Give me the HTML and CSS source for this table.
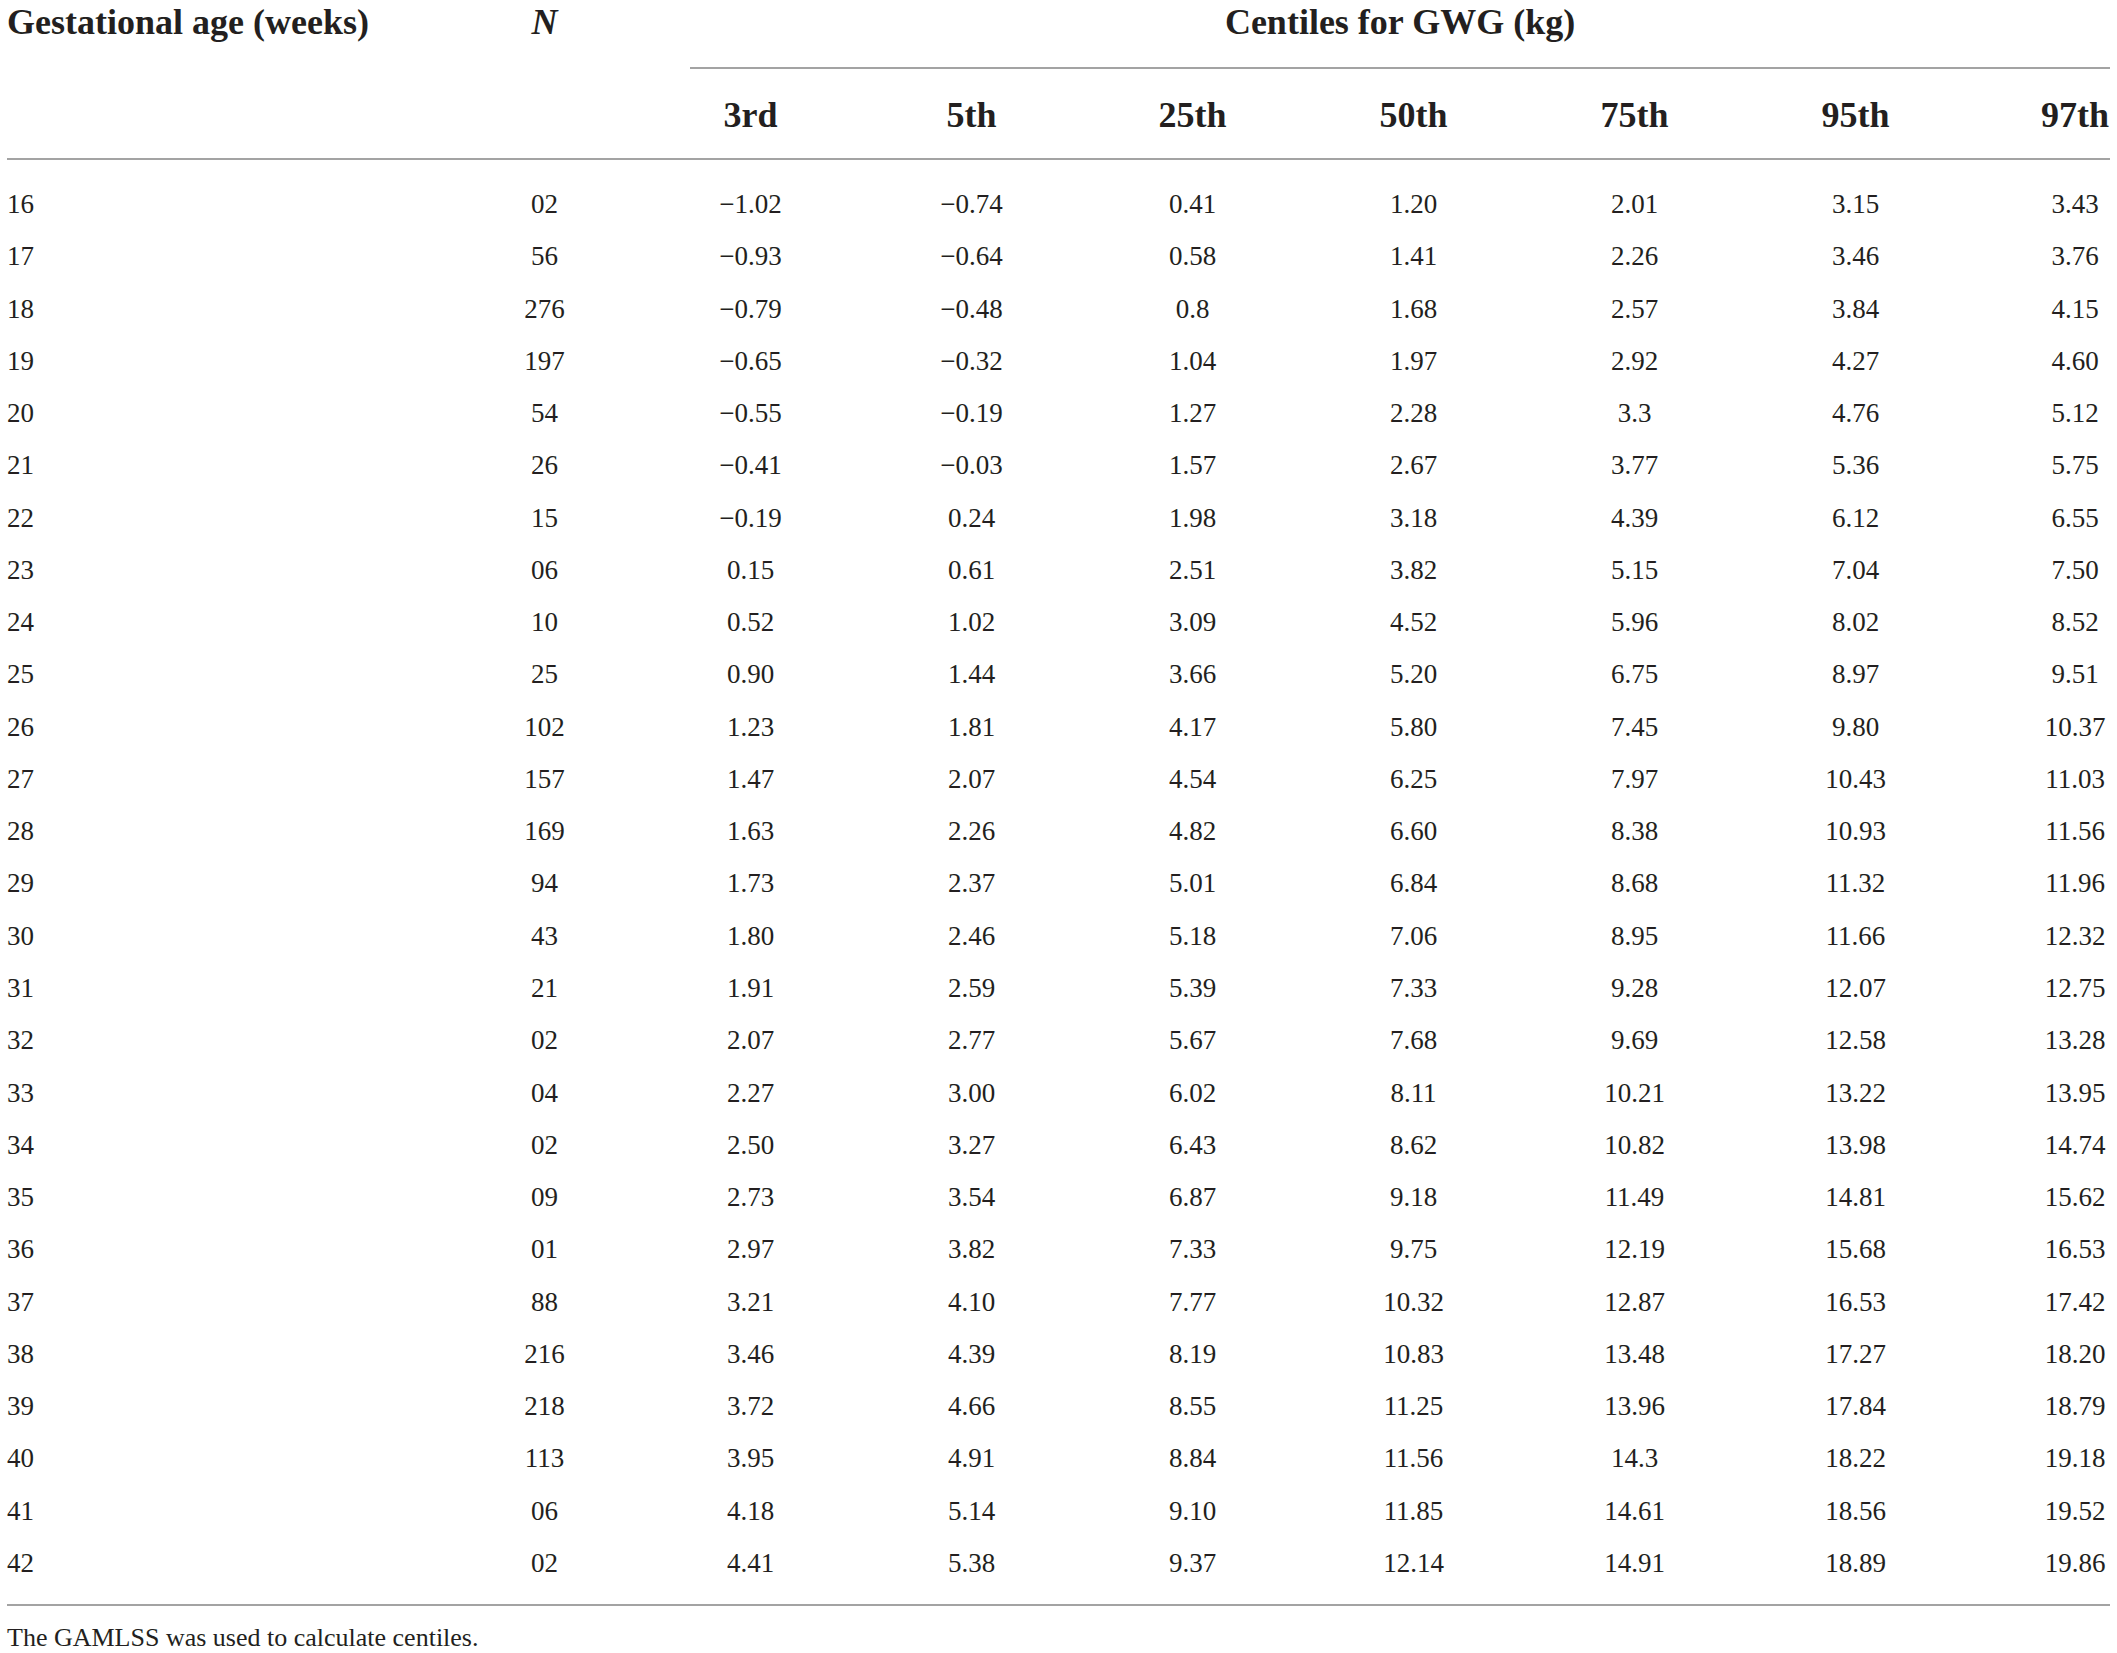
FILE: index.html
```html
<!DOCTYPE html>
<html lang="en">
<head>
<meta charset="utf-8">
<title>Centiles for GWG</title>
<link rel="stylesheet" href="styles.css">
</head>
<body>
<div class="page">
<table class="gwg">
  <colgroup>
    <col class="c-age"><col class="c-n"><col class="c-cen"><col class="c-cen"><col class="c-cen"><col class="c-cen"><col class="c-cen"><col class="c-cen"><col class="c-last">
  </colgroup>
  <thead>
    <tr class="h1">
      <th class="left">Gestational age (weeks)</th>
      <th><em>N</em></th>
      <th colspan="7" class="span"><div class="span-inner">Centiles for GWG (kg)</div></th>
    </tr>
    <tr class="h2">
      <th></th><th></th>
      <th>3rd</th><th>5th</th><th>25th</th><th>50th</th><th>75th</th><th>95th</th><th class="last">97th</th>
    </tr>
  </thead>
  <tbody>
    <tr><td class="left">16</td><td>02</td><td>−1.02</td><td>−0.74</td><td>0.41</td><td>1.20</td><td>2.01</td><td>3.15</td><td class="last">3.43</td></tr>
    <tr><td class="left">17</td><td>56</td><td>−0.93</td><td>−0.64</td><td>0.58</td><td>1.41</td><td>2.26</td><td>3.46</td><td class="last">3.76</td></tr>
    <tr><td class="left">18</td><td>276</td><td>−0.79</td><td>−0.48</td><td>0.8</td><td>1.68</td><td>2.57</td><td>3.84</td><td class="last">4.15</td></tr>
    <tr><td class="left">19</td><td>197</td><td>−0.65</td><td>−0.32</td><td>1.04</td><td>1.97</td><td>2.92</td><td>4.27</td><td class="last">4.60</td></tr>
    <tr><td class="left">20</td><td>54</td><td>−0.55</td><td>−0.19</td><td>1.27</td><td>2.28</td><td>3.3</td><td>4.76</td><td class="last">5.12</td></tr>
    <tr><td class="left">21</td><td>26</td><td>−0.41</td><td>−0.03</td><td>1.57</td><td>2.67</td><td>3.77</td><td>5.36</td><td class="last">5.75</td></tr>
    <tr><td class="left">22</td><td>15</td><td>−0.19</td><td>0.24</td><td>1.98</td><td>3.18</td><td>4.39</td><td>6.12</td><td class="last">6.55</td></tr>
    <tr><td class="left">23</td><td>06</td><td>0.15</td><td>0.61</td><td>2.51</td><td>3.82</td><td>5.15</td><td>7.04</td><td class="last">7.50</td></tr>
    <tr><td class="left">24</td><td>10</td><td>0.52</td><td>1.02</td><td>3.09</td><td>4.52</td><td>5.96</td><td>8.02</td><td class="last">8.52</td></tr>
    <tr><td class="left">25</td><td>25</td><td>0.90</td><td>1.44</td><td>3.66</td><td>5.20</td><td>6.75</td><td>8.97</td><td class="last">9.51</td></tr>
    <tr><td class="left">26</td><td>102</td><td>1.23</td><td>1.81</td><td>4.17</td><td>5.80</td><td>7.45</td><td>9.80</td><td class="last">10.37</td></tr>
    <tr><td class="left">27</td><td>157</td><td>1.47</td><td>2.07</td><td>4.54</td><td>6.25</td><td>7.97</td><td>10.43</td><td class="last">11.03</td></tr>
    <tr><td class="left">28</td><td>169</td><td>1.63</td><td>2.26</td><td>4.82</td><td>6.60</td><td>8.38</td><td>10.93</td><td class="last">11.56</td></tr>
    <tr><td class="left">29</td><td>94</td><td>1.73</td><td>2.37</td><td>5.01</td><td>6.84</td><td>8.68</td><td>11.32</td><td class="last">11.96</td></tr>
    <tr><td class="left">30</td><td>43</td><td>1.80</td><td>2.46</td><td>5.18</td><td>7.06</td><td>8.95</td><td>11.66</td><td class="last">12.32</td></tr>
    <tr><td class="left">31</td><td>21</td><td>1.91</td><td>2.59</td><td>5.39</td><td>7.33</td><td>9.28</td><td>12.07</td><td class="last">12.75</td></tr>
    <tr><td class="left">32</td><td>02</td><td>2.07</td><td>2.77</td><td>5.67</td><td>7.68</td><td>9.69</td><td>12.58</td><td class="last">13.28</td></tr>
    <tr><td class="left">33</td><td>04</td><td>2.27</td><td>3.00</td><td>6.02</td><td>8.11</td><td>10.21</td><td>13.22</td><td class="last">13.95</td></tr>
    <tr><td class="left">34</td><td>02</td><td>2.50</td><td>3.27</td><td>6.43</td><td>8.62</td><td>10.82</td><td>13.98</td><td class="last">14.74</td></tr>
    <tr><td class="left">35</td><td>09</td><td>2.73</td><td>3.54</td><td>6.87</td><td>9.18</td><td>11.49</td><td>14.81</td><td class="last">15.62</td></tr>
    <tr><td class="left">36</td><td>01</td><td>2.97</td><td>3.82</td><td>7.33</td><td>9.75</td><td>12.19</td><td>15.68</td><td class="last">16.53</td></tr>
    <tr><td class="left">37</td><td>88</td><td>3.21</td><td>4.10</td><td>7.77</td><td>10.32</td><td>12.87</td><td>16.53</td><td class="last">17.42</td></tr>
    <tr><td class="left">38</td><td>216</td><td>3.46</td><td>4.39</td><td>8.19</td><td>10.83</td><td>13.48</td><td>17.27</td><td class="last">18.20</td></tr>
    <tr><td class="left">39</td><td>218</td><td>3.72</td><td>4.66</td><td>8.55</td><td>11.25</td><td>13.96</td><td>17.84</td><td class="last">18.79</td></tr>
    <tr><td class="left">40</td><td>113</td><td>3.95</td><td>4.91</td><td>8.84</td><td>11.56</td><td>14.3</td><td>18.22</td><td class="last">19.18</td></tr>
    <tr><td class="left">41</td><td>06</td><td>4.18</td><td>5.14</td><td>9.10</td><td>11.85</td><td>14.61</td><td>18.56</td><td class="last">19.52</td></tr>
    <tr><td class="left">42</td><td>02</td><td>4.41</td><td>5.38</td><td>9.37</td><td>12.14</td><td>14.91</td><td>18.89</td><td class="last">19.86</td></tr>
  </tbody>
</table>
<p class="note">The GAMLSS was used to calculate centiles.</p>
</div>
</body>
</html>
```

FILE: styles.css
```css
html, body {
  margin: 0;
  padding: 0;
  background: #ffffff;
}

body {
  font-family: "Liberation Serif", "Times New Roman", serif;
  color: #231f20;
}

.page {
  padding: 0 7px;
}

.gwg {
  width: 2103px;
  table-layout: fixed;
  border-collapse: separate;
  border-spacing: 0;
}

.c-age { width: 442px; }
.c-n { width: 191px; }
.c-cen { width: 221px; }
.c-last { width: 144px; }

.gwg th,
.gwg td {
  padding: 0;
  text-align: center;
  white-space: nowrap;
}

.gwg .left {
  text-align: left;
}

.gwg .last {
  padding-left: 74px;
}

.gwg th {
  font-size: 36px;
  font-weight: bold;
  line-height: 44px;
  vertical-align: top;
}

.gwg th em {
  font-style: italic;
}

.h1 th.span {
  padding: 0;
}

.span-inner {
  margin-left: 50px;
  padding-bottom: 23px;
  border-bottom: 2px solid #a3a3a3;
  text-align: center;
}

.h2 th {
  padding-top: 24px;
  padding-bottom: 21px;
  border-bottom: 2px solid #a3a3a3;
}

.gwg td {
  font-size: 27px;
  line-height: 52.27px;
  height: 52.27px;
  vertical-align: middle;
}

.gwg tbody tr:first-child td {
  padding-top: 18px;
}

.gwg tbody tr:last-child td {
  padding-bottom: 15px;
  border-bottom: 2px solid #a3a3a3;
}

.note {
  margin: 15px 0 0;
  font-size: 26px;
  line-height: 34px;
}
```
